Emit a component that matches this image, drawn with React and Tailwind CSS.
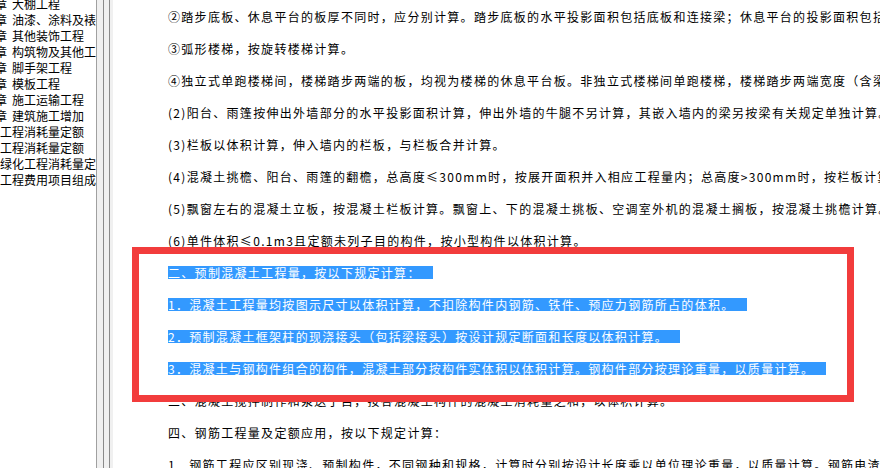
import React from "react";

const treeRows = [
  { pre: "章", text: "大棚工程" },
  { pre: "章", text: "油漆、涂料及裱糊工程" },
  { pre: "章", text: "其他装饰工程" },
  { pre: "章", text: "构筑物及其他工程" },
  { pre: "章", text: "脚手架工程" },
  { pre: "章", text: "模板工程" },
  { pre: "章", text: "施工运输工程" },
  { pre: "章", text: "建筑施工增加" },
  { text: "工程消耗量定额" },
  { text: "工程消耗量定额" },
  { text: "绿化工程消耗量定额" },
  { text: "工程费用项目组成" },
];

const lines = [
  { t: "②踏步底板、休息平台的板厚不同时，应分别计算。踏步底板的水平投影面积包括底板和连接梁；休息平台的投影面积包括平台板和平台梁。" },
  { t: "③弧形楼梯，按旋转楼梯计算。" },
  { t: "④独立式单跑楼梯间，楼梯踏步两端的板，均视为楼梯的休息平台板。非独立式楼梯间单跑楼梯，楼梯踏步两端宽度（含梁）按楼梯计算。" },
  { t: "(2)阳台、雨篷按伸出外墙部分的水平投影面积计算，伸出外墙的牛腿不另计算，其嵌入墙内的梁另按梁有关规定单独计算。" },
  { t: "(3)栏板以体积计算，伸入墙内的栏板，与栏板合并计算。" },
  { t: "(4)混凝土挑檐、阳台、雨篷的翻檐，总高度≤300mm时，按展开面积并入相应工程量内；总高度>300mm时，按栏板计算。" },
  { t: "(5)飘窗左右的混凝土立板，按混凝土栏板计算。飘窗上、下的混凝土挑板、空调室外机的混凝土搁板，按混凝土挑檐计算。" },
  { t: "(6)单件体积≤0.1m3且定额未列子目的构件，按小型构件以体积计算。" },
  { t: "二、预制混凝土工程量，按以下规定计算：", sel: true },
  { t: "1．混凝土工程量均按图示尺寸以体积计算，不扣除构件内钢筋、铁件、预应力钢筋所占的体积。", sel: true },
  { t: "2．预制混凝土框架柱的现浇接头（包括梁接头）按设计规定断面和长度以体积计算。", sel: true },
  { t: "3．混凝土与钢构件组合的构件，混凝土部分按构件实体积以体积计算。钢构件部分按理论重量，以质量计算。", sel: true },
  { t: "三、混凝土搅拌制作和泵送子目，按各混凝土构件的混凝土消耗量之和，以体积计算。" },
  { t: "四、钢筋工程量及定额应用，按以下规定计算：" },
  { t: "1．钢筋工程应区别现浇、预制构件，不同钢种和规格，计算时分别按设计长度乘以单位理论重量，以质量计算。钢筋电渣压力焊接、套筒挤压等接头，以个计算。" },
];

const font = { fontFamily: '"Noto Sans CJK SC", "Noto Sans", sans-serif' };

export default function App() {
  return (
    <div
      className="relative flex w-[880px] h-[468px] overflow-hidden bg-white text-black"
      style={font}
    >
      {/* left tree pane */}
      <div className="w-[96px] shrink-0 overflow-hidden bg-white text-[12px]">
        <div className="mt-[-4px]">
          {treeRows.map((r, i) => (
            <div key={i} className="flex h-[16px] items-center whitespace-nowrap leading-[16px]">
              {r.pre && <span className="ml-[-5px] w-[12px] shrink-0">{r.pre}</span>}
              <span className={r.pre ? "ml-[5px]" : ""}>{r.text}</span>
            </div>
          ))}
        </div>
      </div>

      {/* splitter */}
      <div className="flex h-full shrink-0">
        <div className="w-[1px] bg-[#a0a0a0]" />
        <div className="w-[6px] bg-[#f0f0f0]" />
        <div className="w-[1px] bg-[#8a8a8a]" />
        <div className="w-[5px] bg-[#f0f0f0]" />
        <div className="w-[1px] bg-[#8a8a8a]" />
        <div className="w-[3px] bg-[#f0f0f0]" />
      </div>

      {/* document pane */}
      <div className="flex-1 overflow-hidden pl-[55px] text-[12px] tracking-[1.3px]">
        {lines.map((l, i) => (
          <div key={i} className="flex h-[32px] items-center whitespace-nowrap">
            {l.sel ? (
              <span className="inline-block bg-[#3399ff] pr-[12px] leading-[13px] text-white">{l.t}</span>
            ) : (
              <span className="leading-[13px]">{l.t}</span>
            )}
          </div>
        ))}
      </div>

      {/* annotation box */}
      <div className="pointer-events-none absolute left-[132px] top-[247px] h-[155px] w-[722px] border-[7px] border-[#f23c3c]" />
    </div>
  );
}
